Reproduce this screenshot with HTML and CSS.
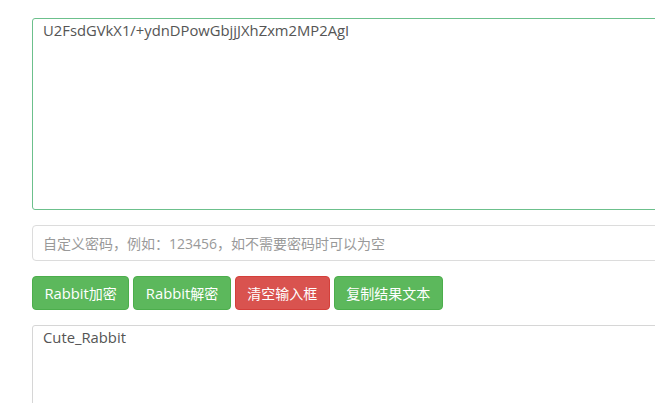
FILE: index.html
```html
<!DOCTYPE html>
<html lang="zh-CN">
<head>
<meta charset="utf-8">
<title>Rabbit加密解密</title>
<link rel="stylesheet" href="styles.css">
</head>
<body>
<div class="page">
  <textarea class="box box-input">U2FsdGVkX1/+ydnDPowGbjjJXhZxm2MP2AgI</textarea>
  <input class="pwd" type="text" placeholder="自定义密码，例如：123456，如不需要密码时可以为空">
  <div class="btns">
    <button class="btn btn-success"><span class="lat">Rabbit</span>加密</button>
    <button class="btn btn-success"><span class="lat">Rabbit</span>解密</button>
    <button class="btn btn-danger">清空输入框</button>
    <button class="btn btn-success">复制结果文本</button>
  </div>
  <textarea class="box box-output">Cute_Rabbit</textarea>
</div>
</body>
</html>
```
FILE: styles.css
```css
html, body {
  margin: 0;
  padding: 0;
  background: #fff;
  overflow: hidden;
}
body {
  font-family: "Open Sans", "Noto Sans CJK SC", sans-serif;
  font-size: 14px;
  color: #555;
}
.page {
  padding: 18px 0 0 32px;
  width: 720px;
  display: flex;
  flex-direction: column;
  gap: 15px;
}
.box {
  display: block;
  box-sizing: border-box;
  width: 700px;
  margin: 0;
  border: 1px solid #ccc;
  border-radius: 3px;
  padding: 1px 10px;
  font: inherit;
  font-size: 14.8px;
  line-height: 20px;
  color: #555;
  resize: none;
  outline: none;
  background: #fff;
}
.box-input {
  height: 192px;
  border-color: #6cc08c;
}
.box-output {
  height: 150px;
  border-color: #d6d6d6;
}
.pwd {
  display: block;
  box-sizing: border-box;
  width: 700px;
  height: 36px;
  margin: 0;
  padding: 0 10px;
  border: 1px solid #dcdcdc;
  border-radius: 4px;
  font: inherit;
  color: #555;
  outline: none;
}
.pwd::placeholder {
  color: #999;
}
.btns {
  display: flex;
  gap: 4px;
}
.btn {
  box-sizing: border-box;
  height: 34px;
  padding: 0 11.5px;
  border: 1px solid;
  border-radius: 4px;
  font: inherit;
  color: #fff;
  cursor: pointer;
}
.lat {
  font-size: 14.75px;
}
.btn-success {
  background: #5cb85c;
  border-color: #4cae4c;
}
.btn-danger {
  background: #d9534f;
  border-color: #d43f3a;
}
```
